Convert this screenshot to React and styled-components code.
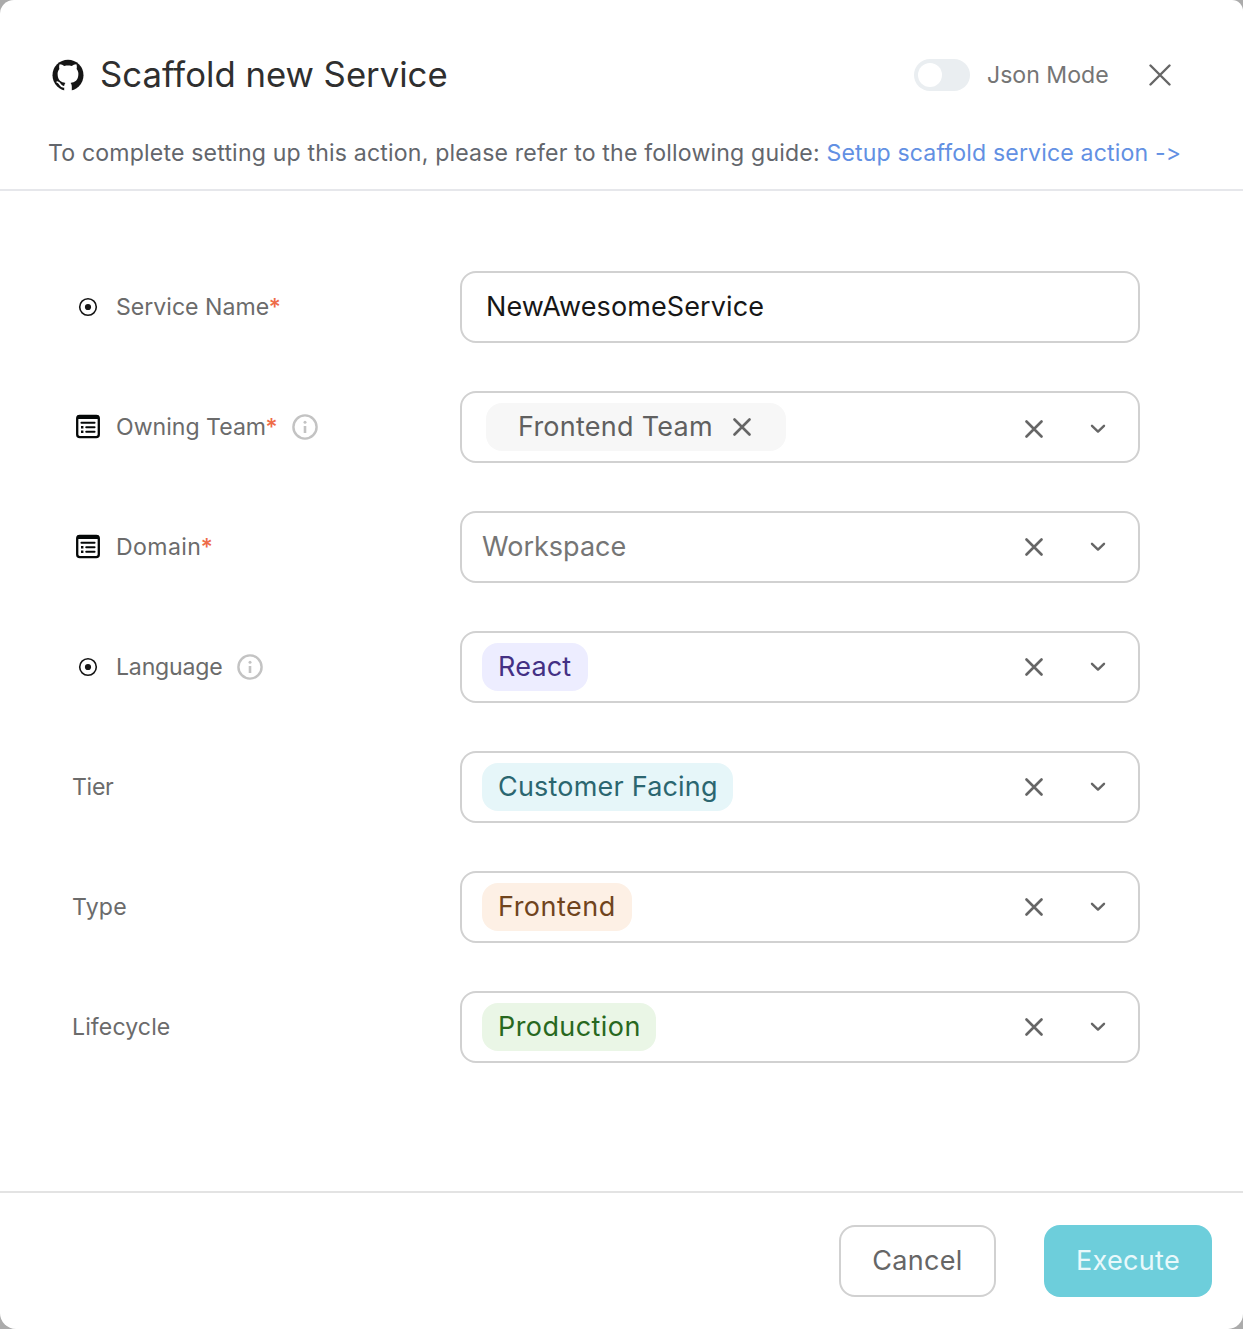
import React from "react";
import styled, { createGlobalStyle, css } from "styled-components";

const GlobalStyle = createGlobalStyle`
  *, *::before, *::after { box-sizing: border-box; }
  body { margin: 0; background: #ababab; font-family: Inter, "Open Sans", sans-serif; }
  button, input { font-family: inherit; }
  button { cursor: pointer; }
`;

const Dialog = styled.section`
  display: flex;
  flex-direction: column;
  height: 1329px;
  background: #fff;
  border-radius: 14px 11px 15px 16px;
`;

const Header = styled.header`
  height: 191px;
  padding: 55px 59px 0 48px;
  border-bottom: 2px solid #e6e7eb;
`;

const TitleRow = styled.div`
  display: flex;
  align-items: center;
  height: 40px;
`;

const Title = styled.h1`
  flex: 1;
  margin: -2px 0 0 12px;
  font-size: 34.7px;
  line-height: 40px;
  font-weight: 400;
  color: #2f2f2f;
`;

const LogoSlot = styled.span`
  display: flex;
  width: 40px;
  justify-content: center;
`;

const Toggle = styled.button`
  display: flex;
  align-items: center;
  width: 56px;
  height: 32px;
  padding: 0 4px;
  border: 0;
  border-radius: 16px;
  background: #eaeef1;
`;

const Knob = styled.span`
  width: 24px;
  height: 24px;
  border-radius: 50%;
  background: #fff;
`;

const ToggleLabel = styled.span`
  width: 149px;
  margin-left: 17px;
  font-size: 23.1px;
  line-height: 32px;
  white-space: nowrap;
  color: #757575;
`;

const IconButton = styled.button`
  display: flex;
  align-items: center;
  justify-content: center;
  width: ${(p) => p.$size}px;
  height: ${(p) => p.$size}px;
  padding: 0;
  border: 0;
  background: transparent;
  color: #666;
`;

const Guide = styled.p`
  margin: 42px 0 0;
  font-size: 23.1px;
  line-height: 32px;
  letter-spacing: 0.17px;
  white-space: nowrap;
  color: #63666c;
`;

const GuideLink = styled.a`
  letter-spacing: 0.15px;
  color: #6290e3;
  text-decoration: none;
`;

const Form = styled.form`
  display: flex;
  flex: 1;
  flex-direction: column;
  gap: 48px;
  padding: 80px 103px 0 72px;
`;

const Row = styled.div`
  display: grid;
  grid-template-columns: 388px 680px;
  height: 72px;
  align-items: center;
`;

const Label = styled.label`
  display: flex;
  align-items: center;
  font-size: 23.1px;
  line-height: 32px;
  letter-spacing: ${(p) => p.$track || 0}px;
  color: #6b6b6b;
`;

const LabelIcon = styled.span`
  display: flex;
  width: 32px;
  height: 32px;
  margin-right: 12px;
`;

const Required = styled.span`
  letter-spacing: 0;
  font-weight: 500;
  margin-left: -0.5px;
  color: #ee6b47;
`;

const InfoSlot = styled.span`
  display: flex;
  margin-left: ${(p) => p.$gap}px;
`;

const fieldFrame = css`
  width: 100%;
  height: 72px;
  border: 2px solid #d1d1d1;
  border-radius: 16px;
  background: #fff;
`;

const TextInput = styled.input`
  ${fieldFrame}
  padding: 0 24px 2px;
  outline: 0;
  font-size: 27px;
  letter-spacing: 0.1px;
  color: #171717;
`;

const Select = styled.div`
  ${fieldFrame}
  display: flex;
  align-items: center;
  padding: 0 20px;
`;

const Value = styled.div`
  display: flex;
  flex: 1;
`;

const PlainValue = styled.span`
  font-size: 27px;
  line-height: 40px;
  color: #757575;
`;

const tones = {
  neutral: ["#f7f7f7", "#606060"],
  purple: ["#ededff", "#443084"],
  teal: ["#e6f6f9", "#2b6670"],
  orange: ["#fdf0e5", "#70441d"],
  green: ["#eaf6e6", "#286820"],
};

const Chip = styled.span`
  display: flex;
  align-items: center;
  height: 48px;
  padding: 0 ${(p) => (p.$tone === "neutral" ? 32 : 16)}px 2px;
  margin-left: ${(p) => (p.$tone === "neutral" ? 4 : 0)}px;
  border-radius: 16px;
  background: ${(p) => tones[p.$tone][0]};
  color: ${(p) => tones[p.$tone][1]};
  width: ${(p) => p.$width}px;
  font-size: 27px;
  letter-spacing: ${(p) => p.$track}px;
  white-space: nowrap;
`;

const ChipRemove = styled(IconButton)`
  margin: 2px 0 0 auto;
`;

const Actions = styled.div`
  display: flex;
  align-items: center;
  gap: 40px;
  padding-right: 8px;
  margin-top: ${(p) => (p.$low ? 4 : 0)}px;
`;

const Footer = styled.footer`
  display: flex;
  justify-content: flex-end;
  gap: 48px;
  height: 138px;
  padding: 32px 31px 0 0;
  border-top: 2px solid #e3e3e3;
`;

const FooterButton = styled.button`
  width: ${(p) => (p.$primary ? 168 : 157)}px;
  height: 72px;
  padding: 0 0 2px;
  border: ${(p) => (p.$primary ? "0" : "2px solid #d1d1d1")};
  border-radius: 16px;
  background: ${(p) => (p.$primary ? "#6dcedb" : "#fff")};
  color: ${(p) => (p.$primary ? "#e9f9fb" : "#666")};
  font-size: 27px;
  letter-spacing: 0.3px;
`;

const Logo = () => (
  <svg width="32" height="32" viewBox="0 0 32 32">
    <circle cx="16" cy="16.2" r="15.5" fill="#151515" />
    <path
      fill="#fff"
      d="M12.2 32v-4.5c0-1.8.5-2.9 1.3-3.6-4.2-.5-7.9-2.3-7.9-9.1 0-2 .7-3.6 1.8-4.9-.4-1.3-.4-3.1.2-4.7 1.6-.1 3.4.8 4.8 1.8 2.4-.6 4.8-.6 7.2 0 1.4-1 3.2-1.9 4.8-1.8.6 1.6.6 3.4.2 4.7 1.1 1.3 1.8 2.9 1.8 4.9 0 6.8-3.7 8.6-7.9 9.1.8.7 1.3 1.8 1.3 3.6V32z"
    />
    <path d="M12.6 27.7c-4.4.7-4-2.4-5.6-3.7-.6-.5-1.1-.8-1.8-1" fill="none" stroke="#fff" strokeWidth="1.7" strokeLinecap="round" />
  </svg>
);

const Cross = ({ size, weight = 2.6 }) => (
  <svg width={size} height={size} viewBox={`0 0 ${size} ${size}`} fill="none" stroke="currentColor" strokeWidth={weight} strokeLinecap="round">
    <path d={`M1.5 1.5 ${size - 1.5} ${size - 1.5}M${size - 1.5} 1.5 1.5 ${size - 1.5}`} />
  </svg>
);

const Chevron = () => (
  <svg width="16" height="10" viewBox="0 0 16 10" fill="none" stroke="currentColor" strokeWidth="2.4" strokeLinecap="round" strokeLinejoin="round">
    <path d="M2 1.8 8 7.6l6-5.8" />
  </svg>
);

const TargetIcon = () => (
  <svg width="32" height="32" viewBox="0 0 32 32">
    <circle cx="16" cy="16" r="8.3" fill="none" stroke="#151515" strokeWidth="1.6" />
    <circle cx="16" cy="16" r="3.1" fill="#151515" />
  </svg>
);

const ListIcon = () => (
  <svg width="32" height="32" viewBox="0 0 32 32" fill="none" stroke="#050808">
    <rect x="5.2" y="4.8" width="21.6" height="21.4" rx="2.6" strokeWidth="2.3" />
    <path d="M5 6.3h22" strokeWidth="3.4" />
    <path d="M9.4 11.7h13.2M14.2 16.3h8.4M14.2 20.8h8.4" strokeWidth="1.9" strokeLinecap="round" />
    <path d="M9 16.3h2.4M9 20.8h2.4" strokeWidth="2.4" />
  </svg>
);

const InfoIcon = () => (
  <svg width="26" height="26" viewBox="0 0 26 26" fill="none" stroke="#c3c3c3">
    <circle cx="13" cy="13" r="11.6" strokeWidth="2.4" />
    <path d="M13 12v7" strokeWidth="2.6" />
    <circle cx="13" cy="8.2" r="1.5" fill="#c3c3c3" stroke="none" />
  </svg>
);

const rows = [
  { label: "Service Name", icon: "target", required: true, input: "NewAwesomeService" },
  { label: "Owning Team", icon: "list", required: true, info: 14, chip: "Frontend Team", tone: "neutral", width: 300, track: 0.25 },
  { label: "Domain", icon: "list", required: true, labelTrack: 0.4, plain: "Workspace" },
  { label: "Language", icon: "target", info: 15, labelTrack: -0.2, chip: "React", tone: "purple", width: 106, track: 0.2 },
  { label: "Tier", labelTrack: -0.3, chip: "Customer Facing", tone: "teal", width: 251, track: 0.2 },
  { label: "Type", labelTrack: 0.2, chip: "Frontend", tone: "orange", width: 150, track: 0.48 },
  { label: "Lifecycle", labelTrack: 0.1, chip: "Production", tone: "green", width: 174, track: 0.42 },
];

function Field({ row }) {
  if (row.input) return <TextInput id={row.label} defaultValue={row.input} />;
  return (
    <Select>
      <Value>
        {row.plain ? (
          <PlainValue>{row.plain}</PlainValue>
        ) : (
          <Chip $tone={row.tone} $width={row.width} $track={row.track}>
            {row.chip}
            {row.tone === "neutral" && (
              <ChipRemove type="button" $size={24} aria-label="Remove"><Cross size={18} /></ChipRemove>
            )}
          </Chip>
        )}
      </Value>
      <Actions $low={row.tone === "neutral"}>
        <IconButton type="button" $size={24} aria-label="Clear"><Cross size={18} /></IconButton>
        <IconButton type="button" $size={24} aria-label="Open"><Chevron /></IconButton>
      </Actions>
    </Select>
  );
}

export default function App() {
  return (
    <>
      <GlobalStyle />
      <Dialog>
        <Header>
          <TitleRow>
            <LogoSlot><Logo /></LogoSlot>
            <Title>Scaffold new Service</Title>
            <Toggle type="button" aria-label="Json Mode"><Knob /></Toggle>
            <ToggleLabel>Json Mode</ToggleLabel>
            <IconButton type="button" $size={48} aria-label="Close"><Cross size={22} weight={2.4} /></IconButton>
          </TitleRow>
          <Guide>
            To complete setting up this action, please refer to the following guide:{" "}
            <GuideLink href="#">Setup scaffold service action -&gt;</GuideLink>
          </Guide>
        </Header>
        <Form>
          {rows.map((row) => (
            <Row key={row.label}>
              <Label $track={row.labelTrack}>
                {row.icon && <LabelIcon>{row.icon === "target" ? <TargetIcon /> : <ListIcon />}</LabelIcon>}
                {row.label}
                {row.required && <Required>*</Required>}
                {row.info && <InfoSlot $gap={row.info}><InfoIcon /></InfoSlot>}
              </Label>
              <Field row={row} />
            </Row>
          ))}
        </Form>
        <Footer>
          <FooterButton type="button">Cancel</FooterButton>
          <FooterButton type="button" $primary>Execute</FooterButton>
        </Footer>
      </Dialog>
    </>
  );
}
